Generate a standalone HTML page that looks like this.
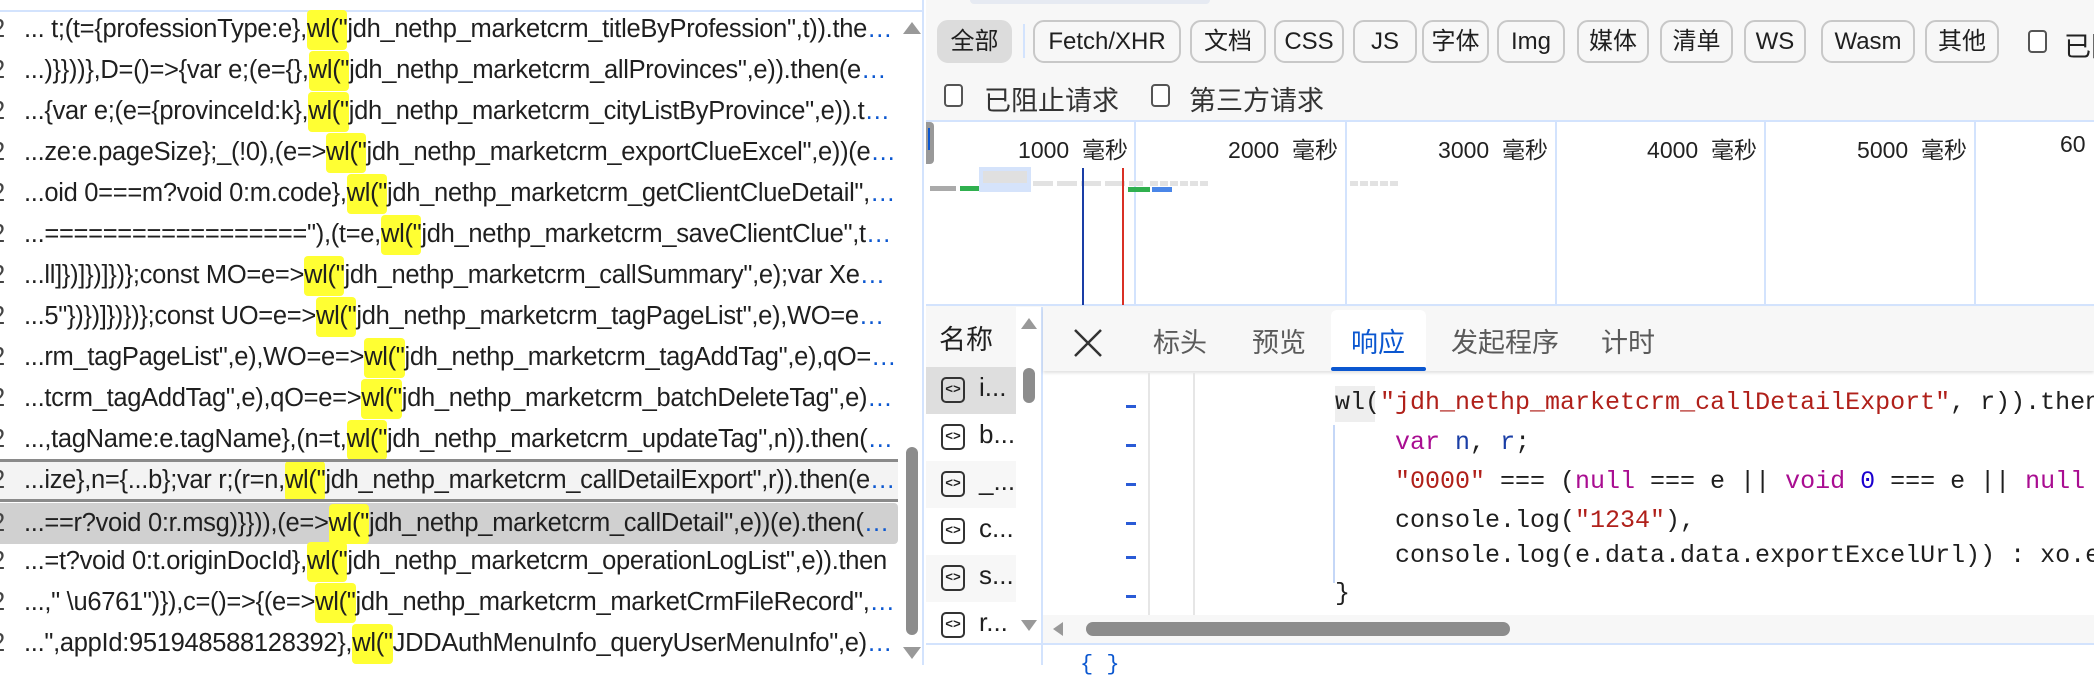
<!DOCTYPE html>
<html><head><meta charset="utf-8"><style>
*{box-sizing:border-box;margin:0;padding:0}
body{width:2094px;height:665px;overflow:hidden;background:#fff;position:relative;font-family:"Liberation Sans","Noto Sans CJK SC",sans-serif;color:#1f1f1f}
.abs{position:absolute}
#left{left:0;top:0;width:924px;height:665px;background:#fff;border-right:2px solid #d3e3fd}
#left .topline{left:0;top:10px;width:924px;height:2px;background:#d3e3fd}
.row{position:absolute;left:0;width:900px;height:41px;line-height:41px;font-size:25.5px;letter-spacing:-0.3px}
.row .n{position:absolute;left:-9px;top:0;color:#444}
.row .t{position:absolute;left:24px;width:874px;white-space:nowrap;overflow:hidden;text-overflow:ellipsis;color:#0b57d0}
.row .t span{color:#1f1f1f}
.row .t b{font-weight:normal;background:#ffff33;border-radius:4px;color:#1f1f1f;padding:5px 0 7px}
.sel1{background:#f3f3f3;border-top:3px solid #8a8a8a;border-bottom:3px solid #8a8a8a}
.sel2{background:#d0d0d0}
#right{left:926px;top:0;width:1168px;height:665px;background:#f7f7f7}
.btn{position:absolute;top:20px;height:43px;border:2px solid #c8c8c8;border-radius:11px;font-size:24px;line-height:39px;text-align:center;color:#1f1f1f;background:#f7f7f7;white-space:nowrap}
.cb{position:absolute;width:19px;height:23px;border:2px solid #555;border-radius:4px;background:#fff}
.lbl{position:absolute;font-size:27px;color:#333;white-space:nowrap}
.grid{position:absolute;top:121px;width:2px;height:184px;background:#d3e3fd}
.gl{position:absolute;top:131px;font-size:23px;color:#222;text-align:right;width:200px;white-space:nowrap}
.code{position:absolute;font-family:"Liberation Mono",monospace;font-size:25px;white-space:pre;color:#1f1f1f;line-height:38px}
.s{color:#b0201a}.k{color:#a90d91}.v{color:#1a3ea6}.num{color:#1c00cf}
.dash{position:absolute;left:1126px;width:10px;height:3px;background:#2a5bd6}
.ico{position:absolute;left:941px;width:24px;height:26px;border:2px solid #333;border-radius:5px;font-size:13px;line-height:21px;text-align:center;font-family:"Liberation Mono",monospace;font-weight:bold}
.nm{position:absolute;left:979px;font-size:26px}
.tab{position:absolute;top:321px;font-size:27px;color:#5a5a5a}
</style></head><body>
<div id="left" class="abs">
<div class="abs topline"></div>
<div class="row" style="top:9px"><span class="n">2</span><div class="t"><span>... t;(t={professionType:e},<b>wl("</b>jdh_nethp_marketcrm_titleByProfession",t)).then(e=&gt;{var t;</span></div></div>
<div class="row" style="top:50px"><span class="n">2</span><div class="t"><span>...)}}))},D=()=&gt;{var e;(e={},<b>wl("</b>jdh_nethp_marketcrm_allProvinces",e)).then(e=&gt;{var t</span></div></div>
<div class="row" style="top:91px"><span class="n">2</span><div class="t"><span>...{var e;(e={provinceId:k},<b>wl("</b>jdh_nethp_marketcrm_cityListByProvince",e)).then(e=&gt;</span></div></div>
<div class="row" style="top:132px"><span class="n">2</span><div class="t"><span>...ze:e.pageSize};_(!0),(e=&gt;<b>wl("</b>jdh_nethp_marketcrm_exportClueExcel",e))(e).then(e=&gt;</span></div></div>
<div class="row" style="top:173px"><span class="n">2</span><div class="t"><span>...oid 0===m?void 0:m.code},<b>wl("</b>jdh_nethp_marketcrm_getClientClueDetail",e)).then</span></div></div>
<div class="row" style="top:214px"><span class="n">2</span><div class="t"><span>...=================="),(t=e,<b>wl("</b>jdh_nethp_marketcrm_saveClientClue",t)).then(e=&gt;</span></div></div>
<div class="row" style="top:255px"><span class="n">2</span><div class="t"><span>...ll]})]})]})};const MO=e=&gt;<b>wl("</b>jdh_nethp_marketcrm_callSummary",e);var Xe=e=&gt;</span></div></div>
<div class="row" style="top:296px"><span class="n">2</span><div class="t"><span>...5"})})]})})};const UO=e=&gt;<b>wl("</b>jdh_nethp_marketcrm_tagPageList",e),WO=e=&gt;wl(</span></div></div>
<div class="row" style="top:337px"><span class="n">2</span><div class="t"><span>...rm_tagPageList",e),WO=e=&gt;<b>wl("</b>jdh_nethp_marketcrm_tagAddTag",e),qO=e=&gt;wl("j</span></div></div>
<div class="row" style="top:378px"><span class="n">2</span><div class="t"><span>...tcrm_tagAddTag",e),qO=e=&gt;<b>wl("</b>jdh_nethp_marketcrm_batchDeleteTag",e),GO</span></div></div>
<div class="row" style="top:419px"><span class="n">2</span><div class="t"><span>...,tagName:e.tagName},(n=t,<b>wl("</b>jdh_nethp_marketcrm_updateTag",n)).then(e=&gt;</span></div></div>
<div class="row sel1" style="top:459px;height:43px;line-height:37px;width:898px"><span class="n">2</span><div class="t"><span>...ize},n={...b};var r;(r=n,<b>wl("</b>jdh_nethp_marketcrm_callDetailExport",r)).then(e=&gt;</span></div></div>
<div class="row sel2" style="top:503px;width:898px;border-radius:0 4px 4px 0"><span class="n">2</span><div class="t"><span>...==r?void 0:r.msg)}})),(e=&gt;<b>wl("</b>jdh_nethp_marketcrm_callDetail",e))(e).then(e=&gt;</span></div></div>
<div class="row" style="top:541px"><span class="n">2</span><div class="t"><span>...=t?void 0:t.originDocId},<b>wl("</b>jdh_nethp_marketcrm_operationLogList",e)).then</span></div></div>
<div class="row" style="top:582px"><span class="n">2</span><div class="t"><span>...," \u6761")}),c=()=&gt;{(e=&gt;<b>wl("</b>jdh_nethp_marketcrm_marketCrmFileRecord",e)).then</span></div></div>
<div class="row" style="top:623px"><span class="n">2</span><div class="t"><span>...",appId:951948588128392},<b>wl("</b>JDDAuthMenuInfo_queryUserMenuInfo",e)).then</span></div></div>
<div class="abs" style="left:903px;top:22px;width:0;height:0;border-left:9px solid transparent;border-right:9px solid transparent;border-bottom:12px solid #999"></div>
<div class="abs" style="left:906px;top:447px;width:12px;height:188px;background:#8c8c8c;border-radius:6px"></div>
<div class="abs" style="left:903px;top:647px;width:0;height:0;border-left:9px solid transparent;border-right:9px solid transparent;border-top:12px solid #999"></div>
</div>

<div id="right" class="abs"></div>
<div class="abs" style="left:970px;top:0;width:240px;height:4px;background:#e6eaf2;border-radius:0 0 8px 8px"></div>
<div class="btn" style="left:937px;width:75px;background:#dcdcdc;border-color:#dcdcdc">全部</div>
<div class="abs" style="left:1023px;top:24px;width:2px;height:34px;background:#d3e3fd"></div>
<div class="btn" style="left:1033px;width:148px">Fetch/XHR</div>
<div class="btn" style="left:1190px;width:76px">文档</div>
<div class="btn" style="left:1274px;width:70px">CSS</div>
<div class="btn" style="left:1353px;width:64px">JS</div>
<div class="btn" style="left:1422px;width:67px">字体</div>
<div class="btn" style="left:1497px;width:68px">Img</div>
<div class="btn" style="left:1577px;width:72px">媒体</div>
<div class="btn" style="left:1660px;width:73px">清单</div>
<div class="btn" style="left:1744px;width:62px">WS</div>
<div class="btn" style="left:1821px;width:94px">Wasm</div>
<div class="btn" style="left:1925px;width:74px">其他</div>
<div class="cb" style="left:2028px;top:30px"></div>
<div class="lbl" style="left:2064px;top:25px;color:#222">已阻</div>
<div class="cb" style="left:944px;top:84px"></div>
<div class="lbl" style="left:984px;top:79px">已阻止请求</div>
<div class="cb" style="left:1151px;top:84px"></div>
<div class="lbl" style="left:1189px;top:79px">第三方请求</div>
<div class="abs" style="left:926px;top:120px;width:1168px;height:186px;background:#fff;border-top:2px solid #d3e3fd;border-bottom:2px solid #d3e3fd"></div>
<div class="abs" style="left:926px;top:122px;width:8px;height:42px;background:#999;border-radius:0 4px 4px 0"></div>
<div class="abs" style="left:928px;top:128px;width:2px;height:22px;background:#0b57d0"></div>
<div class="grid" style="left:1134px"></div><div class="grid" style="left:1345px"></div><div class="grid" style="left:1555px"></div><div class="grid" style="left:1764px"></div><div class="grid" style="left:1974px"></div>
<div class="gl" style="left:928px">1000&nbsp; 毫秒</div>
<div class="gl" style="left:1138px">2000&nbsp; 毫秒</div>
<div class="gl" style="left:1348px">3000&nbsp; 毫秒</div>
<div class="gl" style="left:1557px">4000&nbsp; 毫秒</div>
<div class="gl" style="left:1767px">5000&nbsp; 毫秒</div>
<div class="gl" style="left:2060px;text-align:left">60</div>
<div class="abs" style="left:930px;top:186px;width:26px;height:5px;background:#aaa"></div>
<div class="abs" style="left:960px;top:186px;width:19px;height:5px;background:#30b04f"></div>
<div class="abs" style="left:979px;top:167px;width:52px;height:25px;background:#d5e3fb"></div>
<div class="abs" style="left:983px;top:171px;width:44px;height:12px;background:#e0e0e0"></div>
<div class="abs" style="left:1033px;top:181px;width:110px;height:5px;background:repeating-linear-gradient(90deg,#e2e2e2 0 20px,transparent 20px 24px)"></div>
<div class="abs" style="left:1150px;top:181px;width:60px;height:5px;background:repeating-linear-gradient(90deg,#e2e2e2 0 8px,transparent 8px 10px)"></div>
<div class="abs" style="left:1350px;top:181px;width:50px;height:5px;background:repeating-linear-gradient(90deg,#e2e2e2 0 8px,transparent 8px 10px)"></div>
<div class="abs" style="left:1128px;top:187px;width:22px;height:5px;background:#30b04f"></div>
<div class="abs" style="left:1152px;top:187px;width:20px;height:5px;background:#4a86e8"></div>
<div class="abs" style="left:1082px;top:168px;width:2px;height:137px;background:#1a3ea6"></div>
<div class="abs" style="left:1122px;top:168px;width:2px;height:137px;background:#d93025"></div>
<div class="abs" style="left:926px;top:307px;width:1168px;height:358px;background:#fff"></div>
<div class="abs" style="left:926px;top:307px;width:90px;height:60px;background:#f7f7f7"></div>
<div class="abs" style="left:939px;top:318px;font-size:27px">名称</div>
<div class="abs" style="left:926px;top:367px;width:90px;height:47px;background:#dedede"></div>
<div class="abs" style="left:926px;top:461px;width:90px;height:47px;background:#f7f7f7"></div>
<div class="abs" style="left:926px;top:555px;width:90px;height:47px;background:#f7f7f7"></div>
<div class="ico" style="top:377px">&lt;&gt;</div><div class="nm" style="top:372px">i...</div>
<div class="ico" style="top:424px">&lt;&gt;</div><div class="nm" style="top:419px">b...</div>
<div class="ico" style="top:471px">&lt;&gt;</div><div class="nm" style="top:466px">_...</div>
<div class="ico" style="top:518px">&lt;&gt;</div><div class="nm" style="top:513px">c...</div>
<div class="ico" style="top:565px">&lt;&gt;</div><div class="nm" style="top:560px">s...</div>
<div class="ico" style="top:612px">&lt;&gt;</div><div class="nm" style="top:607px">r...</div>
<div class="abs" style="left:1016px;top:307px;width:26px;height:338px;background:#fff"></div>
<div class="abs" style="left:1021px;top:318px;width:0;height:0;border-left:8px solid transparent;border-right:8px solid transparent;border-bottom:11px solid #999"></div>
<div class="abs" style="left:1023px;top:368px;width:12px;height:35px;background:#8c8c8c;border-radius:6px"></div>
<div class="abs" style="left:1021px;top:620px;width:0;height:0;border-left:8px solid transparent;border-right:8px solid transparent;border-top:11px solid #999"></div>
<div class="abs" style="left:1041px;top:307px;width:2px;height:358px;background:#d3e3fd"></div>
<div class="abs" style="left:926px;top:643px;width:1168px;height:2px;background:#d3e3fd"></div>
<div class="abs" style="left:1043px;top:307px;width:1051px;height:64px;background:#f7f7f7;box-shadow:0 2px 3px rgba(0,0,0,.12)"></div>
<svg class="abs" style="left:1073px;top:328px" width="30" height="30"><path d="M2 2L28 28M28 2L2 28" stroke="#333" stroke-width="2.5"/></svg>
<div class="tab" style="left:1153px">标头</div>
<div class="tab" style="left:1252px">预览</div>
<div class="abs" style="left:1331px;top:310px;width:95px;height:61px;background:#fff;border-radius:6px 6px 0 0"></div>
<div class="tab" style="left:1351px;color:#0b57d0">响应</div>
<div class="abs" style="left:1331px;top:367px;width:95px;height:4px;background:#0b57d0;border-radius:2px"></div>
<div class="tab" style="left:1451px">发起程序</div>
<div class="tab" style="left:1601px">计时</div>
<div class="abs" style="left:1148px;top:373px;width:2px;height:247px;background:#e6e6e6"></div>
<div class="abs" style="left:1193px;top:373px;width:2px;height:247px;background:#e6e6e6"></div>
<div class="abs" style="left:1333px;top:425px;width:2px;height:158px;background:#c5d7f7"></div>
<div class="abs" style="left:1335px;top:386px;width:40px;height:36px;background:#eee"></div>
<div class="dash" style="top:405px"></div><div class="dash" style="top:444px"></div><div class="dash" style="top:483px"></div><div class="dash" style="top:522px"></div><div class="dash" style="top:556px"></div><div class="dash" style="top:595px"></div>
<div class="code" style="left:1335px;top:384px">wl(<span class="s">"jdh_nethp_marketcrm_callDetailExport"</span>, r)).then(e</div>
<div class="code" style="left:1395px;top:424px"><span class="k">var</span> <span class="v">n</span>, <span class="v">r</span>;</div>
<div class="code" style="left:1395px;top:463px"><span class="s">"0000"</span> === (<span class="k">null</span> === e || <span class="k">void</span> <span class="num">0</span> === e || <span class="k">null</span> ===</div>
<div class="code" style="left:1395px;top:502px">console.log(<span class="s">"1234"</span>),</div>
<div class="code" style="left:1395px;top:537px">console.log(e.data.data.exportExcelUrl)) : xo.err</div>
<div class="code" style="left:1335px;top:575px">}</div>
<div class="abs" style="left:1043px;top:615px;width:1051px;height:28px;background:#f7f7f7"></div>
<div class="abs" style="left:1053px;top:622px;width:0;height:0;border-top:7px solid transparent;border-bottom:7px solid transparent;border-right:10px solid #999"></div>
<div class="abs" style="left:1086px;top:622px;width:424px;height:14px;background:#8c8c8c;border-radius:7px"></div>
<div class="abs" style="left:1080px;top:652px;font-family:'Liberation Mono',monospace;font-size:22px;color:#0b57d0">{ }</div>
</body></html>
